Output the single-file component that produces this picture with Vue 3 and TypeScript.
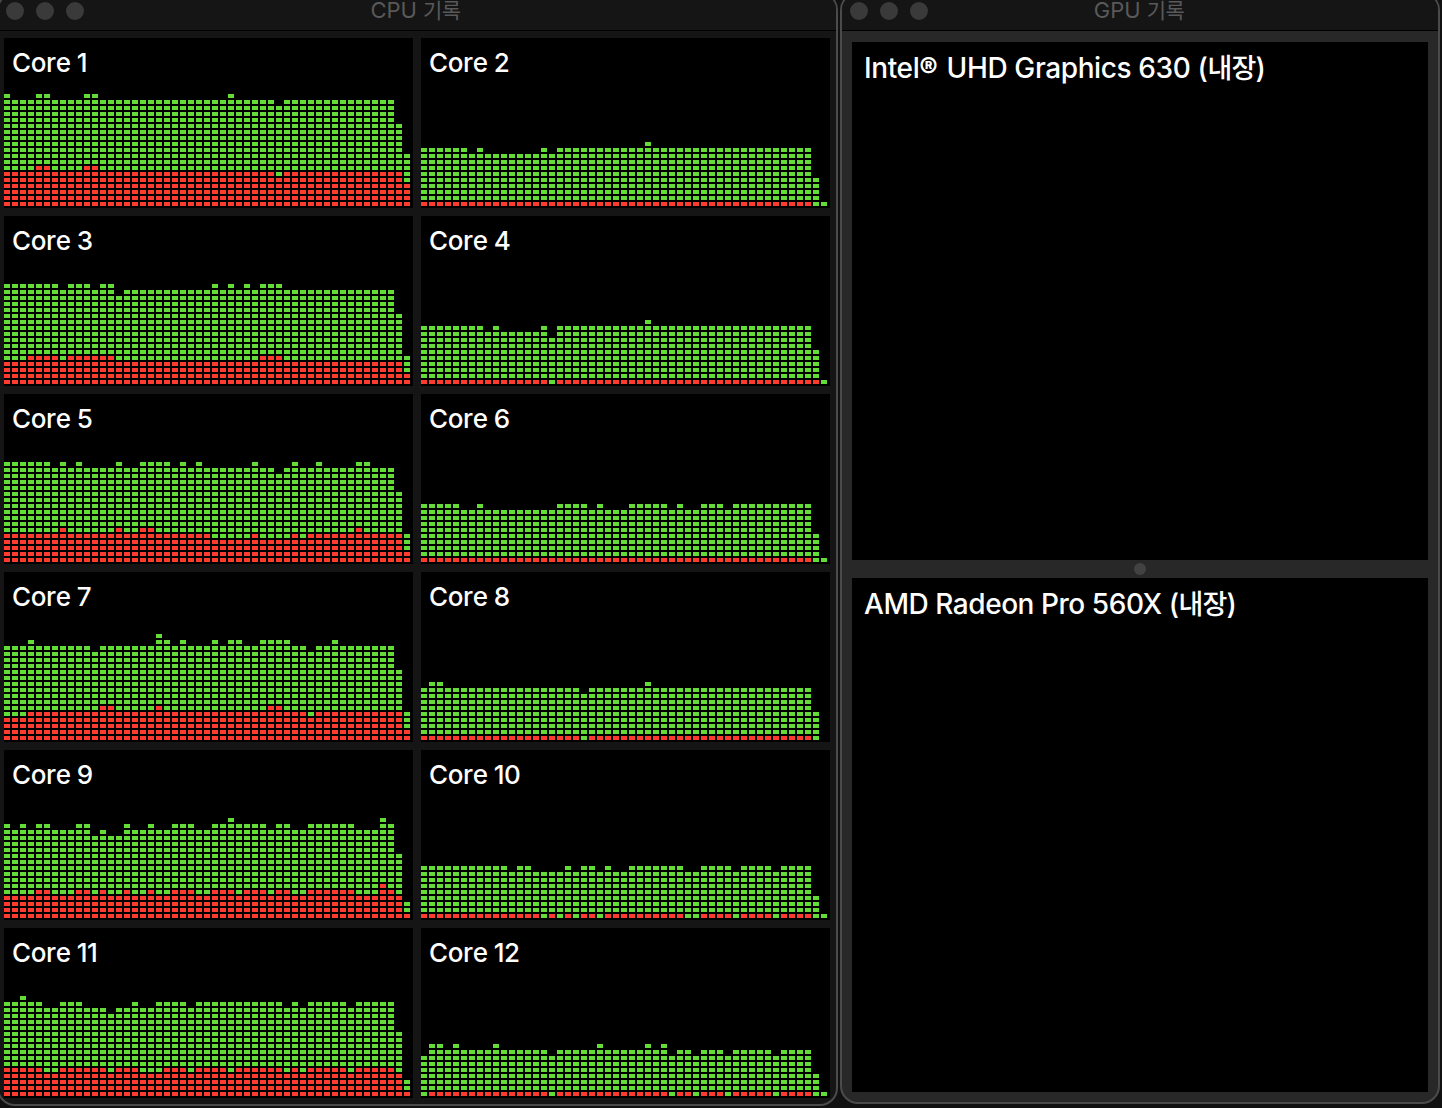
<script setup lang="ts">
interface Series {
  base: number
  except: Record<number, number[]>
}

interface Core {
  name: string
  total: number[]
  system: number[]
}

const COLUMNS = 51
const STEP = 6

const span = (from: number, to: number): number[] =>
  Array.from({ length: to - from + 1 }, (_, i) => from + i)

function expand({ base, except }: Series): number[] {
  const values = new Array<number>(COLUMNS).fill(base)
  for (const [level, columns] of Object.entries(except)) {
    for (const column of columns) values[column] = Number(level)
  }
  return values
}

function core(
  id: number,
  base: number,
  except: Record<number, number[]>,
  systemBase: number,
  systemExcept: Record<number, number[]>,
): Core {
  return {
    name: `Core ${id}`,
    total: expand({ base, except }),
    system: expand({ base: systemBase, except: systemExcept }),
  }
}

const cores: Core[] = [
  core(1, 18, { 19: [0, 4, 5, 10, 11, 28], 17: [34], 14: [49], 9: [50] },
    6, { 7: [4, 5, 10, 11], 5: [34], 4: [50] }),
  core(2, 10, { 9: [6, ...span(8, 14), 16], 11: [28], 5: [49], 1: [50] },
    1, { 0: [49, 50] }),
  core(3, 16, { 17: [...span(0, 6), 8, 9, 10, 12, 13, 26, 28, 30, 32, 33, 34], 15: [14], 12: [49], 5: [50] },
    4, { 5: [...span(3, 6), ...span(8, 13), 32, 33, 34], 2: [50] }),
  core(4, 10, { 9: [8, ...span(10, 14)], 8: [16], 11: [28], 6: [49], 1: [50] },
    1, { 0: [16, 50] }),
  core(5, 16, { 17: [...span(0, 5), 7, 9, 14, ...span(17, 20), 22, 24, 31, 36, 39, 44, 45], 15: [34], 12: [49], 5: [50] },
    5, { 6: [7, 14, 17, 18, 44], 4: [...span(26, 30), ...span(32, 35), 37], 2: [50] }),
  core(6, 10, { 9: [5, 6, ...span(8, 16), 21, 23, 24, 25, 31, 33, 34, 38], 5: [49], 1: [50] },
    1, { 0: [49, 50] }),
  core(7, 16, { 17: [3, 20, 22, 26, 28, 29, ...span(32, 35), 41], 18: [19], 15: [11, 38], 12: [49], 5: [50] },
    5, { 4: [0, 1, 2, 38], 6: [12, 13, 19, 33, 34], 2: [50] }),
  core(8, 9, { 10: [1, 2, 28], 8: [20], 5: [49], 0: [50] },
    1, { 0: [20, 49, 50] }),
  core(9, 16, { 15: [1, 3, 6, 7, 8, 12, 16, 17, 19, 20, 24, 25, 33, 36, 37, 44, 45, 46], 14: [11, 13, 14], 17: [28, 47], 11: [49], 3: [50] },
    4, { 5: [4, 5, 9, 10, 12, 15, 18, 21, 22, 23, 26, 27, 28, 30, 31, 32, 34, 35, ...span(38, 43), 48], 6: [47], 1: [50] }),
  core(10, 9, { 8: [11, ...span(14, 17), 19, 22, 24, 25, 33, 34, 39, 44], 4: [49], 1: [50] },
    1, { 0: [15, 17, 19, 22, 33, 34, 39, 44, 49, 50] }),
  core(11, 16, { 17: [2], 15: [5, 6, 10, 11, 12, 14, 15, 17, 18, 23, 35, 37, 43], 14: [13], 11: [49], 3: [50] },
    5, { 4: [5, 6, 13, 17, 18, 19, 23, 28, 35, 37, 43, 49], 1: [50] }),
  core(12, 8, { 9: [1, 2, 4, 9, 22, 28, 30], 7: [0, 16, 31, 34, 38, 44], 4: [49], 1: [50] },
    1, { 0: [0, 16, 31, 34, 38, 44, 49, 50] }),
]
</script>

<template>
  <main class="desktop">
    <section class="window cpu">
      <header class="titlebar">
        <div class="lights"><i></i><i></i><i></i></div>
        <h1>CPU <span>기록</span></h1>
      </header>
      <div class="cores">
        <article v-for="c in cores" :key="c.name" class="core">
          <h2>{{ c.name }}</h2>
          <div class="graph">
            <div
              v-for="(level, i) in c.total"
              :key="i"
              class="bar"
              :style="{ height: level * STEP + 'px' }"
            >
              <div class="system" :style="{ height: c.system[i] * STEP + 'px' }"></div>
            </div>
          </div>
        </article>
      </div>
    </section>

    <section class="window gpu">
      <header class="titlebar">
        <div class="lights"><i></i><i></i><i></i></div>
        <h1>GPU <span>기록</span></h1>
      </header>
      <div class="cards">
        <article class="card">
          <h2>Intel<b>®</b> UHD Graphics 630 (<span>내장</span>)</h2>
        </article>
        <div class="divider"><i></i></div>
        <article class="card second">
          <h2>AMD Radeon Pro 560X (<span>내장</span>)</h2>
        </article>
      </div>
    </section>
  </main>
</template>

<style>
body {
  margin: 0;
  background: #111;
}
</style>

<style scoped>
.desktop {
  display: flex;
  width: 1442px;
  height: 1108px;
  overflow: hidden;
  background: #111;
  font-family: Inter, "Noto Sans CJK KR", sans-serif;
}

h1,
h2 {
  margin: 0;
  white-space: nowrap;
}

.window {
  box-sizing: border-box;
  flex: none;
  border: 2px solid #4b4b4b;
  border-radius: 18px;
  overflow: hidden;
}

.cpu {
  width: 841px;
  height: 1114px;
  margin: -8px 0 0 -3px;
  background: #151515;
}

.gpu {
  width: 600px;
  height: 1112px;
  margin: -8px 0 0 2px;
  background: #282828;
}

.titlebar {
  position: relative;
  box-sizing: border-box;
  height: 37px;
  border-bottom: 1px solid #000;
  background: #151515;
}

.lights {
  display: flex;
  gap: 12px;
  padding: 8px 0 0 7px;
}

.gpu .lights {
  padding-left: 8px;
}

.lights i {
  width: 18px;
  height: 18px;
  border-radius: 50%;
  background: #3a3a3a;
}

h1 {
  position: absolute;
  top: 6px;
  left: 0;
  right: 4px;
  color: #595959;
  font-size: 22px;
  font-weight: 400;
  line-height: 20px;
  text-align: center;
}

.gpu h1 {
  right: 2px;
}

h1 span {
  font-size: 21px;
  letter-spacing: -0.6px;
}

.cores {
  display: grid;
  grid-template-columns: 409px 409px;
  grid-auto-rows: 170px;
  gap: 8px;
  padding: 7px 0 0 5px;
}

.core {
  display: flex;
  flex-direction: column;
  justify-content: space-between;
  background: #000;
}

.core h2 {
  padding: 9px 0 0 8px;
  color: #fff;
  font-size: 26px;
  font-weight: 500;
  font-kerning: none;
  letter-spacing: -0.4px;
  word-spacing: -0.3px;
  line-height: 32px;
}

.graph {
  display: flex;
  align-items: flex-end;
  gap: 2px;
  height: 120px;
  padding-bottom: 2px;
}

.bar {
  display: flex;
  align-items: flex-end;
  width: 6px;
  background: repeating-linear-gradient(to top, #64dc37 0 4px, #000 4px 6px);
}

.system {
  width: 6px;
  background: repeating-linear-gradient(to top, #ff3b30 0 4px, #000 4px 6px);
}

.cards {
  padding: 11px 10px 0;
}

.card {
  height: 518px;
  background: #000;
}

.card.second {
  height: 514px;
}

.card h2 {
  padding: 9px 0 0 12px;
  color: #fff;
  font-size: 28px;
  font-weight: 500;
  letter-spacing: -0.45px;
  line-height: 34px;
}

.card b {
  margin-right: 2px;
  font-weight: 800;
}

.card:first-child h2 {
  letter-spacing: -0.38px;
}

.card span {
  font-size: 27px;
  letter-spacing: -0.9px;
}

.divider {
  display: flex;
  align-items: center;
  justify-content: center;
  height: 18px;
}

.divider i {
  width: 12px;
  height: 12px;
  border-radius: 50%;
  background: #424242;
}
</style>
